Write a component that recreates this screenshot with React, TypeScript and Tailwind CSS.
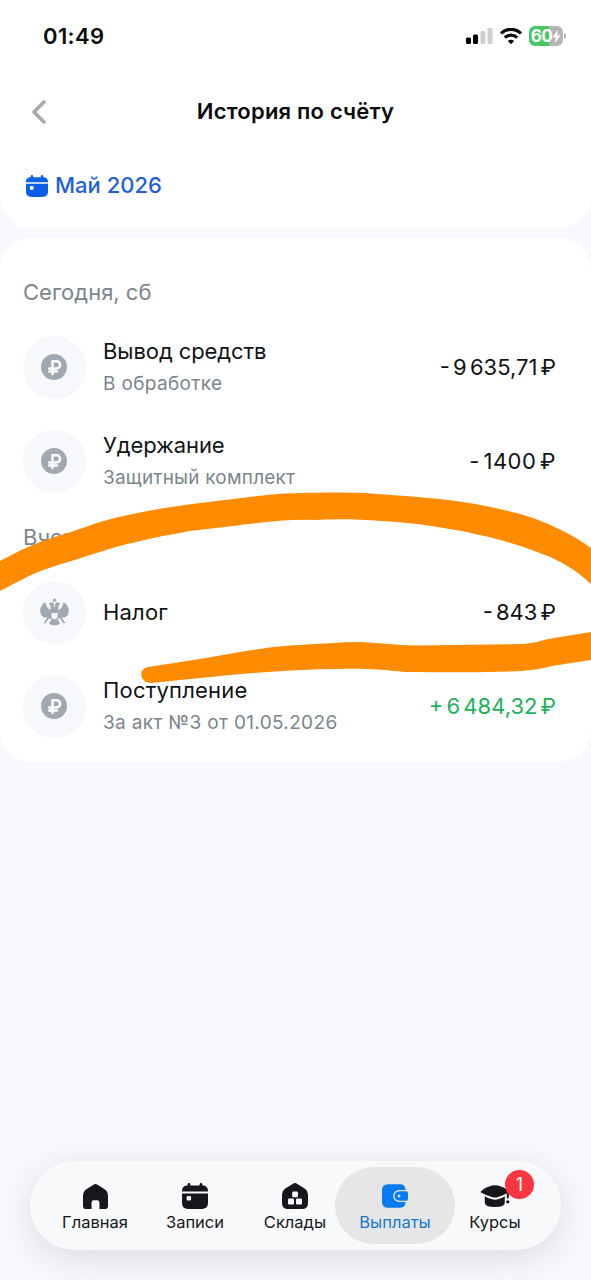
import type { ReactNode } from 'react';

interface Operation {
  id: number;
  title: string;
  titleClass: string;
  note?: string;
  noteClass?: string;
  amount: string;
  amountClass: string;
  icon: 'ruble' | 'eagle';
}

interface Day {
  label: string;
  operations: Operation[];
}

const days: Day[] = [
  {
    label: 'Сегодня, сб',
    operations: [
      {
        id: 1,
        title: 'Вывод средств',
        titleClass: 'tracking-[-0.08px]',
        note: 'В обработке',
        noteClass: 'tracking-[0.35px]',
        amount: '- 9 635,71 ₽',
        amountClass: 'text-[#111315]',
        icon: 'ruble',
      },
      {
        id: 2,
        title: 'Удержание',
        titleClass: 'tracking-[-0.1px]',
        note: 'Защитный комплект',
        noteClass: 'tracking-[0.2px]',
        amount: '- 1400 ₽',
        amountClass: 'text-[#111315] tracking-[0.5px]',
        icon: 'ruble',
      },
    ],
  },
  {
    label: 'Вчера, пт',
    operations: [
      {
        id: 3,
        title: 'Налог',
        titleClass: 'tracking-[0.2px]',
        amount: '- 843 ₽',
        amountClass: 'text-[#111315]',
        icon: 'eagle',
      },
      {
        id: 4,
        title: 'Поступление',
        titleClass: 'tracking-[0.2px]',
        note: 'За акт №3 от 01.05.2026',
        noteClass: 'tracking-[0.35px]',
        amount: '+ 6 484,32 ₽',
        amountClass: 'text-[#20b15a]',
        icon: 'ruble',
      },
    ],
  },
];

const CalendarIcon = ({ className }: { className: string }) => (
  <svg viewBox="0 0 26 26" className={className} fill="currentColor">
    <rect x="5.6" y="0" width="2.8" height="6" rx="1.4" />
    <rect x="17.6" y="0" width="2.8" height="6" rx="1.4" />
    <path d="M5 2.6h16a5 5 0 0 1 5 5v1H0v-1a5 5 0 0 1 5-5z" />
    <path
      fillRule="evenodd"
      d="M0 10.4h26V19c0 5-2 7-7 7H7c-5 0-7-2-7-7zM5.8 13a1.2 1.2 0 0 0-1.2 1.2v2.1a1.2 1.2 0 0 0 1.2 1.2h2.1a1.2 1.2 0 0 0 1.2-1.2v-2.1A1.2 1.2 0 0 0 7.9 13z"
    />
  </svg>
);

const HomeIcon = () => (
  <svg viewBox="0 0 24 24" className="h-[25px] w-[25px]" fill="currentColor">
    <path d="M10 .8Q12-.6 14 .8l7.5 4.8Q24 7.5 24 11v10q0 3-3 3h-5.2v-6.2q0-2.300-2.300-2.300h-3q-2.300 0-2.300 2.300V24H3q-3 0-3-3V11Q0 7.500 2.500 5.600z" />
  </svg>
);

const WarehouseIcon = () => (
  <svg viewBox="0 0 26 26" className="h-[26px] w-[26px]" fill="currentColor">
    <path d="M11 .8q2-1.400 4 0l8 5Q26 8 26 11.500V20q0 6-6 6H6q-6 0-6-6v-8.500Q0 8 3 5.800z" />
    <g fill="#f8f9fb">
      <rect x="10.200" y="8.400" width="5.800" height="5.800" rx="1.300" />
      <rect x="6" y="15.600" width="6" height="6" rx="1.300" />
      <rect x="14" y="15.600" width="6" height="6" rx="1.300" />
    </g>
  </svg>
);

const WalletIcon = () => (
  <svg viewBox="0 0 26 24" className="h-[24px] w-[26px]">
    <path d="M6 .3h12q5 0 5.500 5.200v13Q23 23.700 18 23.700H6q-6 0-6-6V6.300q0-6 6-6z" fill="#0a7bf0" />
    <path d="M25 6.800H17a5.200 5.200 0 0 0 0 10.400h8" fill="#0a7bf0" stroke="#e4e6e8" strokeWidth="1.400" />
    <rect x="16" y="7.500" width="10" height="9" rx="2" fill="#0a7bf0" />
    <circle cx="17" cy="12" r="1.400" fill="#e4e6e8" />
  </svg>
);

const CoursesIcon = () => (
  <svg viewBox="0 0 30 24" className="h-[24px] w-[30px]" fill="currentColor">
    <path d="M1 7.200Q6 3 12 1.600q3-.8 6 0 6 1.400 10.500 4.800.9 1-.2 2Q23 11.500 18 12.900q-3 1-6 0Q5.500 11.400 1 8.600q-1-.7 0-1.400z" />
    <path d="M4.800 12.200q3 1.800 6.500 2.900 3.700 1.100 7.400 0 3.300-1.100 6.100-2.900v6.300q0 4.500-10 4.500t-10-4.500z" />
    <rect x="26.800" y="8.500" width="2" height="6" rx="1" />
    <circle cx="27.800" cy="17.800" r="1.600" />
  </svg>
);

const RubleIcon = () => (
  <svg viewBox="0 0 26 26" className="h-[26px] w-[26px]">
    <circle cx="13" cy="13" r="13" fill="#a0a9b2" />
    <path
      d="M11.500 20V7.300h4a3.600 3.600 0 0 1 0 7.200H8.200M8.200 17.500H16"
      fill="none"
      stroke="#fff"
      strokeWidth="2.500"
      strokeLinecap="round"
      strokeLinejoin="round"
    />
  </svg>
);

const EagleIcon = () => (
  <svg viewBox="0 0 29 28" className="h-[28px] w-[29px]" fill="#a0a9b2">
    <circle cx="14.500" cy="2.200" r="1.700" />
    {/* wings */}
    <path d="M5.500 4.300C1 6.500-.6 11.500.6 15.400c.8 2.700 3 4.200 5.500 4.200l4.200-.4V12C7.800 10.600 6 7.800 5.500 4.300z" />
    <path d="M23.500 4.300c4.500 2.200 6.100 7.200 4.900 11.100-.8 2.700-3 4.200-5.500 4.200l-4.200-.4V12c2.500-1.400 4.300-4.200 4.800-7.700z" />
    {/* heads */}
    <path d="M8.800 5.500 12 4l2 2.200V15h-3.500V7.500z" />
    <path d="M20.200 5.500 17 4l-2 2.200V15h3.500V7.500z" />
    <path d="M13 9h3v8h-3zM7.500 12h14v8.500h-14z" />
    {/* claws */}
    <path d="M9.500 18 5 24.500M19.500 18l4.500 6.500" stroke="#a0a9b2" strokeWidth="1.800" strokeLinecap="round" />
    <path d="M12 20h5l3 5.800q-5.500 3.400-11 0z" />
    <path d="M11.400 15h6.200v3.200q0 2.200-3.100 3.200-3.100-1-3.100-3.200z" fill="#f6f8fc" />
  </svg>
);

const StatusBar = () => (
  <div className="flex h-[72px] items-center justify-between pl-[43px] pr-[25px]">
    <span className="text-[22px] font-semibold tracking-[0.4px]">01:49</span>
    <div className="flex items-center">
      <svg viewBox="0 0 27 16" className="h-[16px] w-[27px]">
        <rect x="0" y="9.500" width="5" height="6.500" rx="1.500" />
        <rect x="7" y="6.500" width="5" height="9.500" rx="1.500" />
        <rect x="14.500" y="3" width="5" height="13" rx="1.500" fill="#cfcfd1" />
        <rect x="21.500" y="0" width="5" height="16" rx="1.500" fill="#cfcfd1" />
      </svg>
      <svg viewBox="0 0 22 16" className="ml-[7px] h-[16px] w-[22px]" fill="none" stroke="currentColor" strokeWidth="3.200">
        <path d="M1 5.400a14.200 14.200 0 0 1 20 0" />
        <path d="M4.800 9.700a8.800 8.800 0 0 1 12.400 0" />
        <path d="M11 16.200 7.800 13a4.500 4.500 0 0 1 6.400 0z" fill="currentColor" stroke="none" />
      </svg>
      <div className="ml-[7px] flex h-[20px] w-[34px] items-center justify-center rounded-[6px] bg-linear-to-r from-[#45c960] from-60% to-[#b4b5b7] to-60% text-white">
        <span className="text-[17px] font-bold leading-none tracking-[-0.5px]">60</span>
        <svg viewBox="0 0 9 13" className="h-[13px] w-[9px]" fill="currentColor">
          <path d="M6 0 .3 7.200h3.400L2.800 13l5.900-7.600H5.300z" />
        </svg>
      </div>
      <div className="ml-[1px] h-[6px] w-[2px] rounded-r-full bg-[#b4b5b7]" />
    </div>
  </div>
);

const OperationRow = ({ operation }: { operation: Operation }) => (
  <div className="flex h-[94px] items-center">
    <div className="flex h-[63px] w-[63px] items-center justify-center rounded-full bg-[#f6f8fc] pr-[1px]">
      {operation.icon === 'ruble' ? <RubleIcon /> : <EagleIcon />}
    </div>
    <div className="ml-[17px] flex-1">
      <p className={`text-[22px] leading-[31px] text-[#111315] ${operation.titleClass}`}>{operation.title}</p>
      {operation.note && (
        <p className={`mt-[1px] text-[19px] leading-[31px] text-[#7b858d] ${operation.noteClass}`}>{operation.note}</p>
      )}
    </div>
    <p className={`whitespace-nowrap text-[22px] [word-spacing:-3px] ${operation.amountClass}`}>{operation.amount}</p>
  </div>
);

interface TabProps {
  label: string;
  icon: ReactNode;
  active?: boolean;
  badge?: number;
}

const Tab = ({ label, icon, active, badge }: TabProps) => (
  <div className={`relative flex h-[77px] flex-col items-center ${
    active ? '-mx-[10px] w-[120px] rounded-full bg-[#e4e6e8] text-[#1b78c8]' : 'w-[100px] text-[#15171a]'
  }`}>
    <div className="mt-[16px] flex h-[26px] items-center">{icon}</div>
    <span className="mt-[2px] text-[16.5px] leading-[22px]">{label}</span>
    {badge && (
      <span className="absolute left-[60px] top-[3px] flex h-[29px] w-[29px] items-center justify-center rounded-full bg-[#fb3640] text-[18px] text-white">
        {badge}
      </span>
    )}
  </div>
);

// Freehand marker strokes drawn over the list
const MarkerStrokes = () => (
  <svg viewBox="0 0 591 200" className="pointer-events-none absolute left-0 top-[490px] h-[200px] w-[591px]" fill="#ff8c00">
    <path d="M0 71 C10 66 18 61 28 57 C42 51 54 47 68 43 C80 39 90 35 100 32 C135 22 168 17 200 13 L267 5 Q284 3 300 3 C330 2 365 2 391 5 C440 8 484 13 530 27 C553 35 573 45 591 58 V94 C575 79 560 71 545 65 C505 49 466 41 425 35 C390 31 350 28 315 30 C285 29 260 33 233 36 L190 41 C150 48 120 55 90 65 C60 75 45 78 25 88 L0 101z" />
    <path d="M148 177 L200 169 L240 162 C265 158 278 156 300 155 C320 154 340 152 360 152 C382 153 398 155 415 155.500 L524 154 C534 153 540 151 548 149 L591 142 V170 L552 176 C540 179 533 180 522 181 C485 183 440 182 405 182 C382 179 355 178 340 179 C290 179 240 184 200 188 L152 193 C139 193 138 179 148 177z" />
  </svg>
);

const App = () => {
  return (
    <div className="relative flex h-[1280px] w-[591px] flex-col overflow-hidden bg-[#f7f9fd] font-['Inter','Noto_Sans',sans-serif] text-[#0b0c0d]">
      {/* Header */}
      <header className="h-[228px] rounded-b-[32px] bg-white">
        <StatusBar />
        <div className="grid h-[79px] grid-cols-[100px_1fr_100px] items-center">
          <svg viewBox="0 0 15 24" className="ml-[31px] h-[24px] w-[15px]">
            <path d="M13 2 3 12l10 10" fill="none" stroke="#a6abb0" strokeWidth="3.600" strokeLinecap="round" strokeLinejoin="round" />
          </svg>
          <h1 className="whitespace-nowrap text-center text-[22px] font-semibold tracking-[0.2px]">История по счёту</h1>
        </div>
        <div className="flex h-[69px] items-center pl-[26px] text-[#0a5fe8]">
          <CalendarIcon className="h-[22px] w-[22px]" />
          <span className="ml-[7px] text-[22px] font-medium text-[#1f60d6]">Май 2026</span>
        </div>
      </header>

      {/* Operations */}
      <main className="mt-[10px] rounded-[32px] bg-white pb-[9px] pl-[23px] pr-[35px] pt-[25px]">
        {days.map((day) => (
          <section key={day.label}>
            <h2 className="flex h-[57px] items-center pt-[1px] text-[22px] text-[#7b858d]">{day.label}</h2>
            {day.operations.map((operation) => (
              <OperationRow key={operation.id} operation={operation} />
            ))}
          </section>
        ))}
      </main>

      <MarkerStrokes />

      {/* Bottom navigation */}
      <nav className="mx-[30px] mb-[30px] mt-auto flex h-[89px] items-center rounded-full bg-[#f8f9fb] pl-[15px] shadow-[0_8px_36px_rgba(0,0,0,0.12)]">
        <Tab label="Главная" icon={<HomeIcon />} />
        <Tab label="Записи" icon={<CalendarIcon className="h-[26px] w-[26px]" />} />
        <Tab label="Склады" icon={<WarehouseIcon />} />
        <Tab label="Выплаты" icon={<WalletIcon />} active />
        <Tab label="Курсы" icon={<CoursesIcon />} badge={1} />
      </nav>
    </div>
  );
};

export default App;
